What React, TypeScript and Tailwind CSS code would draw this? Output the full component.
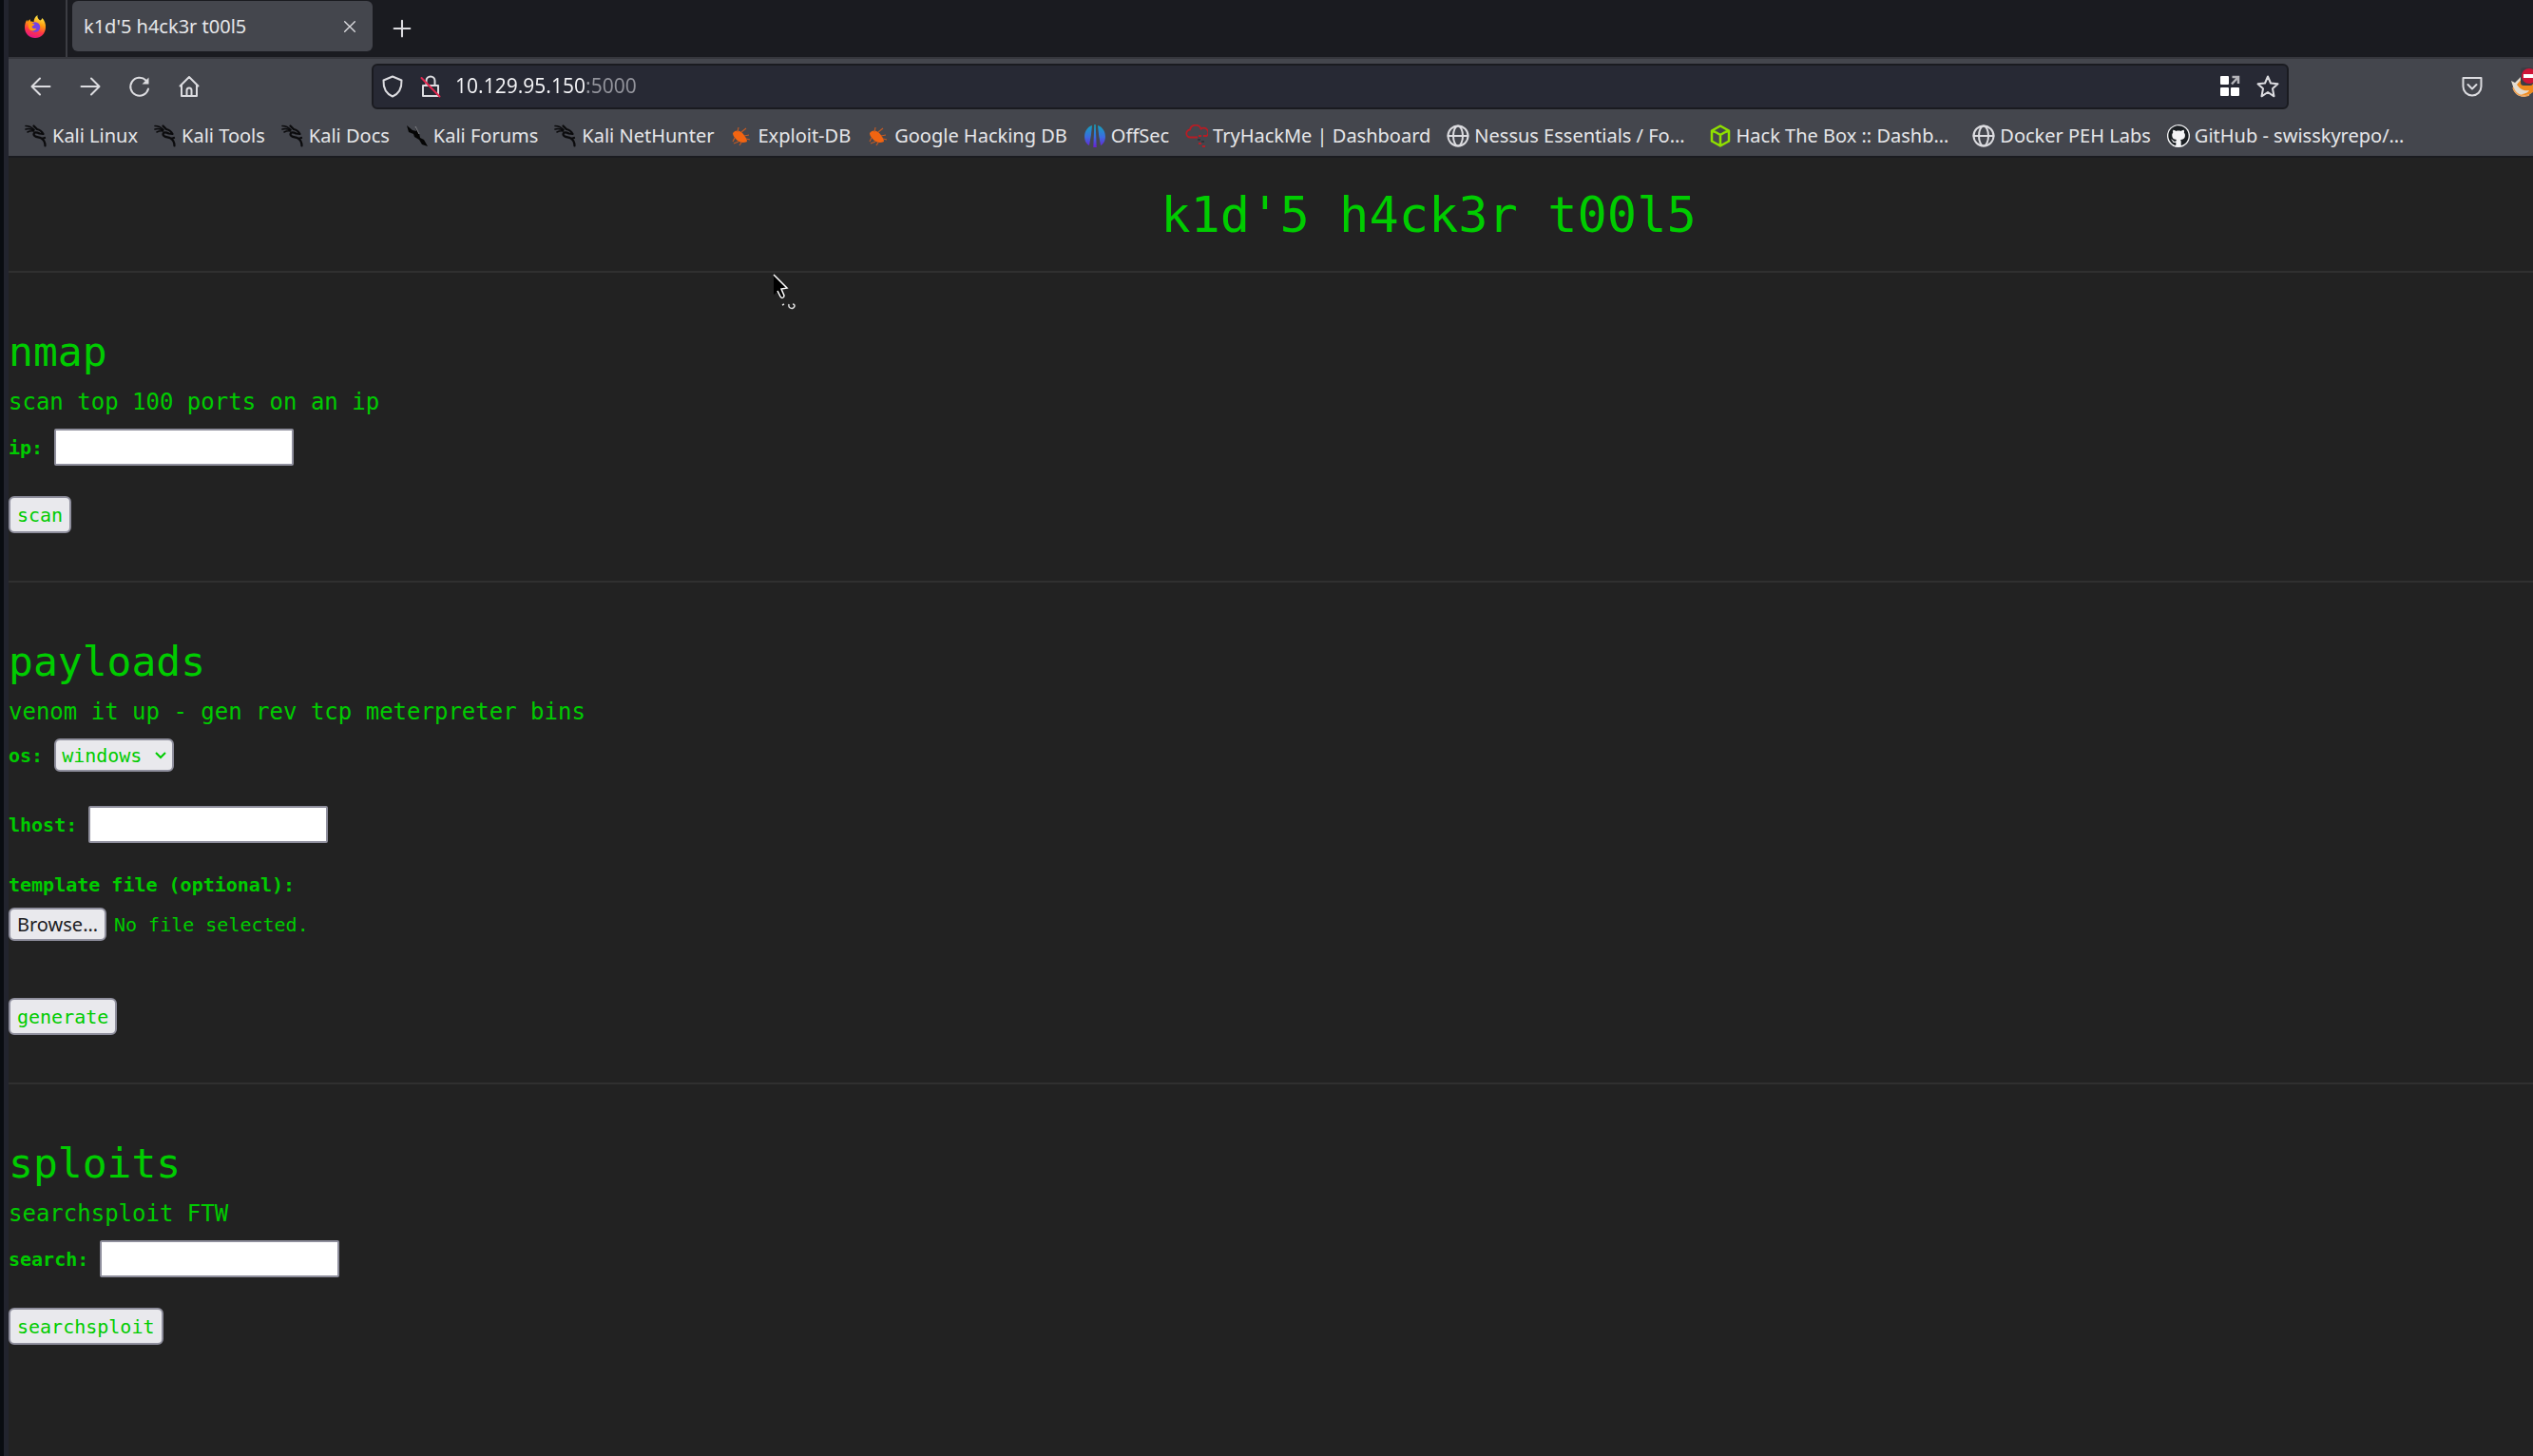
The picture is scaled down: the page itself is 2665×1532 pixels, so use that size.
import type { ReactNode } from "react";
import { FaGithub } from "react-icons/fa";

/* ---------- browser icons ---------- */

const Firefox = () => (
  <svg viewBox="0 0 24 24" className="size-6">
    <defs>
      <linearGradient id="ff" x1="0.7" y1="0" x2="0.4" y2="1">
        <stop offset="0" stopColor="#fff44f" />
        <stop offset="0.4" stopColor="#ff980e" />
        <stop offset="0.7" stopColor="#ff3647" />
        <stop offset="1" stopColor="#e31587" />
      </linearGradient>
    </defs>
    <path fill="url(#ff)" d="M14.500 0c-.6 2.800 1 4.200 2.700 5.500 1.200-.5 2-1.500 2.200-2.500 2.400 2.500 4 6 3.600 10.200C22.600 19.500 18 24 12 24S1 19.500 1 13c0-3 .8-6 2.400-8.200L4 7c.7-1.300 1.500-2 2.600-2.700L7 6.500c1.500-.2 2.500 0 3.500.7C10.600 4 12 1.500 14.500 0z" />
    <circle cx="12" cy="12.500" r="5.200" fill="#7542e5" />
    <path fill="#ff980e" d="M5 8c2 0 4 .2 6.500 1.400-1 1.600-2.600 1.300-3 2.800.8 1.600 2.500 2.400 5 1.600-1.500 3-5.500 3.400-7.500 1.200C4.500 13 4.500 10 5 8z" />
  </svg>
);

const Line = ({ children, className = "size-6" }: { children: ReactNode; className?: string }) => (
  <svg viewBox="0 0 24 24" fill="none" stroke="#dcdce0" strokeWidth="2" strokeLinecap="round" strokeLinejoin="round" className={className}>
    {children}
  </svg>
);

const Back = () => <Line><path d="M21.500 12H3M11 3.500L2.500 12l8.500 8.500" /></Line>;
const Forward = () => <Line><path d="M2.500 12H21M13 3.500l8.500 8.500-8.500 8.500" /></Line>;
const Reload = () => (
  <Line>
    <path d="M21 14.500A9.500 9.500 0 1 1 18.500 5.500" />
    <path d="M21.500 2.500v7h-7z" fill="#dcdce0" stroke="none" />
  </Line>
);
const Home = () => (
  <Line>
    <path d="M2.500 11.500L12 2l9.500 9.500M4 10.500V22h16V10.500M9.500 22v-6a2.500 2.500 0 0 1 5 0v6" />
  </Line>
);
const Shield = () => (
  <Line><path d="M12 1.500L2.500 5.500c-.3 8 2.500 14 9.500 17 7-3 9.800-9 9.500-17z" /></Line>
);
const LockOff = () => (
  <Line>
    <path d="M7.500 11V6a4.500 4.500 0 0 1 9 0v5M4 11h16v11H4z" />
    <path d="M2.500 3l19 19.500" stroke="#e22850" />
  </Line>
);
const Apps = () => (
  <svg viewBox="0 0 24 24" className="size-6">
    <g fill="#fff">
      <rect x="2" y="1" width="9" height="9" rx="1" />
      <rect x="2" y="13" width="9" height="9" rx="1" />
      <rect x="13" y="13" width="9" height="9" rx="1" />
    </g>
    <path d="M14.500 2H21v7M20.500 2.500L14 9.500" fill="none" stroke="#b5b5ba" strokeWidth="2.500" />
  </svg>
);
const Star = () => (
  <Line><path d="M12 1.500l3 7 7.500.8-5.500 5 1.500 8L12 18l-6.500 4.300 1.500-8-5.500-5L9 8.500z" /></Line>
);
const Pocket = () => (
  <Line>
    <path d="M2.500 3h19v9a9.500 9.500 0 0 1-19 0z" />
    <path d="M7.500 10l4.500 4.500 4.500-4.500" />
  </Line>
);
const FoxExtension = () => (
  <svg viewBox="0 0 24 32" className="h-8 w-6">
    <path fill="#e4ddd2" d="M1 14l4 2 6-6 13 4v10c-3 6-9 8-14 6S3 24 3 20z" />
    <path fill="#f08a1d" d="M7 18l5-6 12 2v12c-4 3-9 4-13 2 5 0 8-2 9-4-4 1-9 0-13-6z" />
    <path fill="none" stroke="#f0a050" strokeWidth="1.500" d="M3 21c2 7 9 11 17 8" />
    <rect x="11" y="0" width="13" height="19" rx="3" fill="#3c3d44" />
    <circle cx="20" cy="9" r="8" fill="#cf1437" />
    <rect x="14" y="7" width="12" height="4" fill="#fff" />
  </svg>
);

/* ---------- bookmark icons ---------- */

const Dragon = () => (
  <svg viewBox="0 0 24 24" fill="none" stroke="#0b0b0d" strokeWidth="2.200" strokeLinecap="round" strokeLinejoin="round" className="size-6">
    <path d="M1 1.500c3 0 6 1 9 4M1 5c3-1 6-.5 8.500 1.500M3 8c2-1 4-1.500 6.500-1" strokeWidth="1.600" />
    <path d="M9.500 1.500L13 5c2.500.5 5 2 6.500 5l-4-.5C13 8 9.500 7.500 9.500 10.500c.5 3 5 2.500 8 4 2.500 1.500 4 3.500 4 8M18 15l3-1" />
  </svg>
);
const ForumDragon = () => (
  <svg viewBox="0 0 24 24" className="size-6">
    <path fill="#050505" d="M1 1l6 5 4 1-1-5 4 7 1 5 4 2 4 7-6-2-3-5-5-3-1-3-5-2z" />
    <path fill="none" stroke="#8c8d92" d="M10 2l4 8" />
  </svg>
);
const Bug = () => (
  <svg viewBox="0 0 24 24" className="size-6">
    <path fill="#f26411" d="M3 9c3-4 8-3 11 1 2 3 4 5 4 8-4 2-9 1-12-3-2-2-3-4-3-6z" />
    <path stroke="#c25a24" strokeWidth="1.200" fill="none" d="M8 8l1-5M12 8l5-4M15 12l5-1M17 15l4 1M5 14l-2 4M9 18l-5 2M12 19l-2 3" />
  </svg>
);
const OffSec = () => (
  <svg viewBox="0 0 24 24" className="size-6">
    <defs>
      <linearGradient id="os" x1="0" y1="0" x2="0" y2="1">
        <stop offset="0" stopColor="#12a5b8" />
        <stop offset="0.550" stopColor="#3b6be0" />
        <stop offset="1" stopColor="#6a1fd0" />
      </linearGradient>
    </defs>
    <path fill="url(#os)" d="M9 1C-1 4-1 19 6 22 7.500 15 8.500 8 9 1zM11.300 0h1.400l1 24h-3.400zM15 1c10 3 10 18 3 21C16.500 15 15.500 8 15 1z" />
  </svg>
);
const TryHackMe = () => (
  <svg viewBox="0 0 24 24" fill="none" stroke="#b81c24" strokeWidth="1.800" className="size-6">
    <path d="M13 13.500H5.500a4 4 0 0 1-.5-8 6 6 0 0 1 11.500-1 4.500 4.500 0 0 1 5.500 8" />
    <path strokeDasharray="3 2" d="M14 12h8M14 20h5M18 23h4" />
    <path stroke="#33343a" strokeDasharray="3 2" d="M13 16h5M17 18h5" />
  </svg>
);
const Globe = () => (
  <Line>
    <circle cx="12" cy="12" r="10.500" />
    <ellipse cx="12" cy="12" rx="5" ry="10.500" />
    <path d="M1.500 12h21" />
  </Line>
);
const HackTheBox = () => (
  <svg viewBox="0 0 24 24" fill="none" stroke="#8fe000" strokeWidth="2.500" strokeLinejoin="round" className="size-6">
    <path d="M12 1.500l9 5v11l-9 5-9-5v-11zM7 8l5 3 5-3M12 11v11M4 7l3 1M20 7l-3 1" />
  </svg>
);
const GitHub = () => (
  <span className="flex size-6 items-center justify-center rounded-full bg-[#f4f4f6]">
    <FaGithub className="size-[22px] text-[#1b1f23]" />
  </span>
);

const bookmarks: { name: string; icon: ReactNode; cut?: boolean }[] = [
  { name: "Kali Linux", icon: <Dragon /> },
  { name: "Kali Tools", icon: <Dragon /> },
  { name: "Kali Docs", icon: <Dragon /> },
  { name: "Kali Forums", icon: <ForumDragon /> },
  { name: "Kali NetHunter", icon: <Dragon /> },
  { name: "Exploit-DB", icon: <Bug /> },
  { name: "Google Hacking DB", icon: <Bug /> },
  { name: "OffSec", icon: <OffSec /> },
  { name: "TryHackMe | Dashboard", icon: <TryHackMe /> },
  { name: "Nessus Essentials / Fo…", icon: <Globe />, cut: true },
  { name: "Hack The Box :: Dashb…", icon: <HackTheBox />, cut: true },
  { name: "Docker PEH Labs", icon: <Globe /> },
  { name: "GitHub - swisskyrepo/…", icon: <GitHub />, cut: true },
];

function BrowserChrome() {
  return (
    <header className="font-['Noto_Sans',sans-serif] text-[20px] text-[#e6e6e9]">
      <div className="flex h-[60px] bg-[#1a1b20]">
        <div className="flex w-[62px] items-center border-r-2 border-[#3c3d43] pb-1 pl-4">
          <Firefox />
        </div>
        <div className="ml-[5px] mt-px flex h-[53px] w-[316px] items-center justify-between rounded-md bg-[#44464d] pl-3 pr-3">
          <span>k1d'5 h4ck3r t00l5</span>
          <button aria-label="Close tab" className="flex size-6 items-center justify-center">
            <Line className="size-4"><path d="M4 4l16 16M20 4L4 20" /></Line>
          </button>
        </div>
        <button aria-label="New tab" className="ml-[19px] flex size-6 items-center justify-center self-center">
          <Line className="size-5"><path d="M12 2v20M2 12h20" strokeWidth="2.500" /></Line>
        </button>
      </div>

      <div className="flex h-[61px] items-center border-t-2 border-[#36373d] bg-[#44464d] pb-0.5">
        <nav aria-label="Navigation" className="flex w-[382px] gap-7 pl-[22px]">
          <button aria-label="Back"><Back /></button>
          <button aria-label="Forward"><Forward /></button>
          <button aria-label="Reload"><Reload /></button>
          <button aria-label="Home"><Home /></button>
        </nav>
        <div className="flex h-12 min-w-0 flex-1 items-center rounded-md border-2 border-[#1a1b20] bg-[#272934] px-2">
          <Shield />
          <span className="ml-4"><LockOff /></span>
          <input
            aria-label="Address"
            defaultValue="10.129.95.150:5000"
            className="ml-3.5 min-w-0 flex-1 bg-[linear-gradient(90deg,#f4f4f7_138px,#93949c_138px)] bg-clip-text text-[21px] text-transparent outline-none"
          />
          <button aria-label="Apps"><Apps /></button>
          <button aria-label="Bookmark this page" className="ml-4"><Star /></button>
        </div>
        <div className="flex w-[257px] items-center justify-end gap-7">
          <button aria-label="Save to Pocket"><Pocket /></button>
          <button aria-label="Extension" className="pb-2"><FoxExtension /></button>
        </div>
      </div>

      <nav aria-label="Bookmarks" className="flex h-[45px] items-center gap-[17px] border-b-2 border-[#1a1b20] bg-[#44464d] pl-[17px]">
        {bookmarks.map((b) => (
          <a key={b.name} href="#" className={b.cut ? "flex items-center gap-[5px] whitespace-nowrap pr-2" : "flex items-center gap-[5px] whitespace-nowrap"}>
            {b.icon}
            <span>{b.name}</span>
          </a>
        ))}
      </nav>
    </header>
  );
}

/* ---------- page ---------- */

const buttonClass = "block h-[39px] rounded-md border-2 border-[#8f8f9d] bg-[#e9e9ed] px-[7px]";

function Tool({ title, about, children }: { title: string; about: string; children: ReactNode }) {
  return (
    <section className="border-t-2 border-[#303030] pb-[50px] pt-14">
      <h2 className="text-[43px] leading-[54px]">{title}</h2>
      <p className="mt-3 text-[24px] leading-7">{about}</p>
      {children}
    </section>
  );
}

function Field({ id, label }: { id: string; label: string }) {
  return (
    <div className="flex items-center gap-3">
      <label htmlFor={id} className="font-bold">{label}</label>
      <input id={id} type="text" className="h-[39px] w-[252px] rounded-xs border-2 border-[#8f8f9d] bg-white px-1" />
    </div>
  );
}

function Cursor() {
  return (
    <svg viewBox="0 0 26 40" className="pointer-events-none absolute left-[804px] top-[122px] h-10 w-[26px]">
      <path d="M1 1v21l5-4 3 7c2 2 4 1 3-2l-2-7 6-1z" fill="#000" />
      <path d="M1 1l14 14-6 1 3 7c0 3-3 3-4 1l-3-6" fill="none" stroke="#fff" strokeWidth="1.500" />
      <path d="M10 33l2-1M17 32c-1 5 5 6 6 2 0-1-1-2-2-2" fill="none" stroke="#ddd" strokeWidth="1.500" />
    </svg>
  );
}

export default function App() {
  return (
    <div className="flex min-h-screen overflow-hidden bg-[#222222]">
      <div className="w-1 shrink-0 bg-[#090c11]" />
      <div className="w-[5px] shrink-0 bg-[#22242e]" />
      <div className="min-w-0 flex-1">
        <BrowserChrome />
        <main className="relative w-[112.5%] font-['DejaVu_Sans_Mono',monospace] text-[20px] leading-6 text-[#00cc00]">
          <h1 className="pb-7 pt-[29px] text-center text-[52px] leading-[62px]">k1d'5 h4ck3r t00l5</h1>
          <Tool title="nmap" about="scan top 100 ports on an ip">
            <form className="mt-3.5">
              <Field id="ip" label="ip:" />
              <button type="button" className={`${buttonClass} mt-8`}>scan</button>
            </form>
          </Tool>
          <Tool title="payloads" about="venom it up - gen rev tcp meterpreter bins">
            <form className="mt-3.5">
              <div className="flex items-center gap-3">
                <label htmlFor="os" className="font-bold">os:</label>
                <div className="relative flex items-center">
                  <select id="os" className="h-[35px] w-[126px] appearance-none rounded-md border-2 border-[#8f8f9d] bg-[#e9e9ed] pl-1.5">
                    <option>windows</option>
                    <option>linux</option>
                    <option>android</option>
                  </select>
                  <svg viewBox="0 0 12 8" className="pointer-events-none absolute right-2 h-2 w-3">
                    <path d="M1 1l5 5 5-5" fill="none" stroke="#00cc00" strokeWidth="2" />
                  </svg>
                </div>
              </div>
              <div className="mt-9"><Field id="lhost" label="lhost:" /></div>
              <label htmlFor="template" className="mt-8 block font-bold">template file (optional):</label>
              <div className="relative mt-3 flex items-center gap-2">
                <input id="template" type="file" className="sr-only" />
                <label htmlFor="template" className="flex h-[35px] items-center rounded-md border-2 border-[#8f8f9d] bg-[#e9e9ed] px-[7px] font-['Noto_Sans',sans-serif] text-[#1c1c22]">Browse…</label>
                <span>No file selected.</span>
              </div>
              <button type="button" className={`${buttonClass} mt-[60px]`}>generate</button>
            </form>
          </Tool>
          <Tool title="sploits" about="searchsploit FTW">
            <form className="mt-3.5">
              <Field id="search" label="search:" />
              <button type="button" className={`${buttonClass} mt-8`}>searchsploit</button>
            </form>
          </Tool>
          <Cursor />
        </main>
      </div>
    </div>
  );
}
